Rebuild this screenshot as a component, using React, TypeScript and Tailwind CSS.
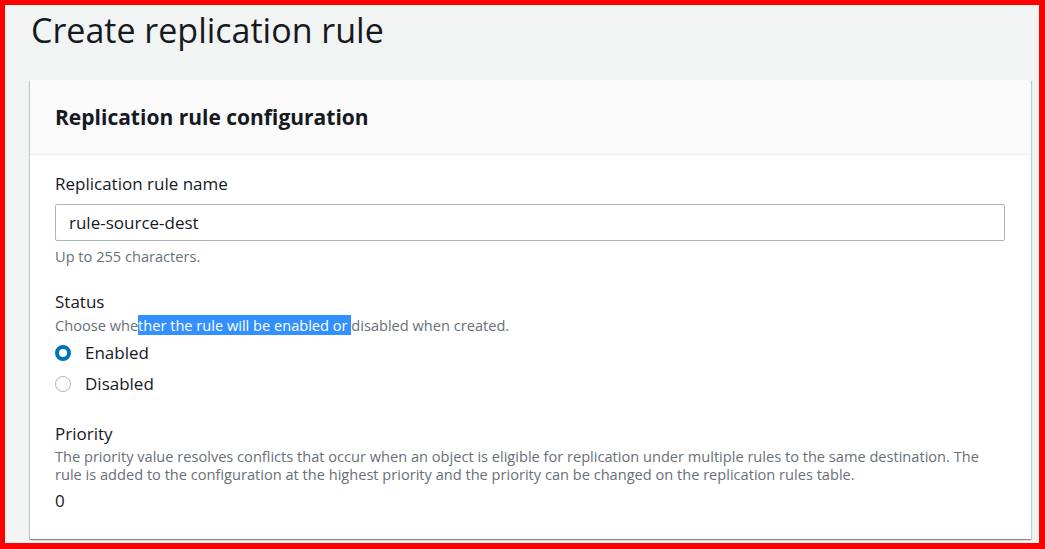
import React from 'react';

const font = { fontFamily: '"Open Sans", "Noto Sans", Arial, sans-serif' };

const Radio = ({ checked, label }: { checked?: boolean; label: string }) => (
  <label className="flex items-center h-6 text-[17px] text-[#16191f]">
    {checked ? (
      <span className="w-4 h-4 rounded-full border-[4px] border-[#0073bb] bg-white box-border" />
    ) : (
      <span className="w-4 h-4 rounded-full border border-[#aab7b8] bg-white box-border" />
    )}
    <span className="ml-[14px] leading-6">{label}</span>
  </label>
);

export default function App() {
  return (
    <div
      className="w-[1045px] h-[549px] box-border overflow-hidden bg-[#f2f3f3] border-solid border-[#ff0000] border-l-[5px] border-t-[5px] border-r-[6px] border-b-[6px]"
      style={font}
    >
      <h1 className="pt-[5px] pl-[26px] text-[34px] leading-[40px] font-normal text-[#16191f]">
        Create replication rule
      </h1>

      <div className="mt-[30px] ml-[25px] w-[1001px] bg-white shadow-[0_1px_1px_0_rgba(0,28,36,0.3),1px_1px_1px_0_rgba(0,28,36,0.15),-1px_1px_1px_0_rgba(0,28,36,0.15)]">
        <div className="bg-[#fafafa] border-b border-[#eaeded] px-[25px] py-[23px]">
          <h2 className="text-[21px] leading-[28px] font-bold text-[#16191f]">
            Replication rule configuration
          </h2>
        </div>

        <div className="pl-[25px] pr-[26px] pt-[18px] pb-[27px]">
          <div className="text-[17px] leading-[22px] text-[#16191f]">Replication rule name</div>
          <div className="mt-[9px] h-[37px] border border-[#aab7b8] rounded-[2px] flex items-center px-[13px] text-[17px] text-[#16191f]">
            rule-source-dest
          </div>
          <div className="mt-[5px] text-[14.6px] leading-[20px] text-[#687078]">Up to 255 characters.</div>

          <div className="mt-[25px] text-[17px] leading-[22px] text-[#16191f]">Status</div>
          <div className="mt-[2px] text-[14.6px] leading-[20px] text-[#687078]">
            Choose whe
            <span className="bg-[#3390ff] text-white">ther the rule will be enabled or </span>
            disabled when created.
          </div>
          <div className="mt-[6px]">
            <Radio checked label="Enabled" />
          </div>
          <div className="mt-[7px]">
            <Radio label="Disabled" />
          </div>

          <div className="mt-[27px] text-[17px] leading-[22px] text-[#16191f]">Priority</div>
          <div className="mt-[2px] text-[14.6px] leading-[18px] text-[#687078]">
            <div className="whitespace-nowrap">
              The priority value resolves conflicts that occur when an object is eligible for replication under multiple rules to the same destination. The
            </div>
            <div className="whitespace-nowrap">
              rule is added to the configuration at the highest priority and the priority can be changed on the replication rules table.
            </div>
          </div>
          <div className="mt-[7px] text-[17px] leading-[22px] text-[#16191f]">0</div>
        </div>
      </div>
    </div>
  );
}
